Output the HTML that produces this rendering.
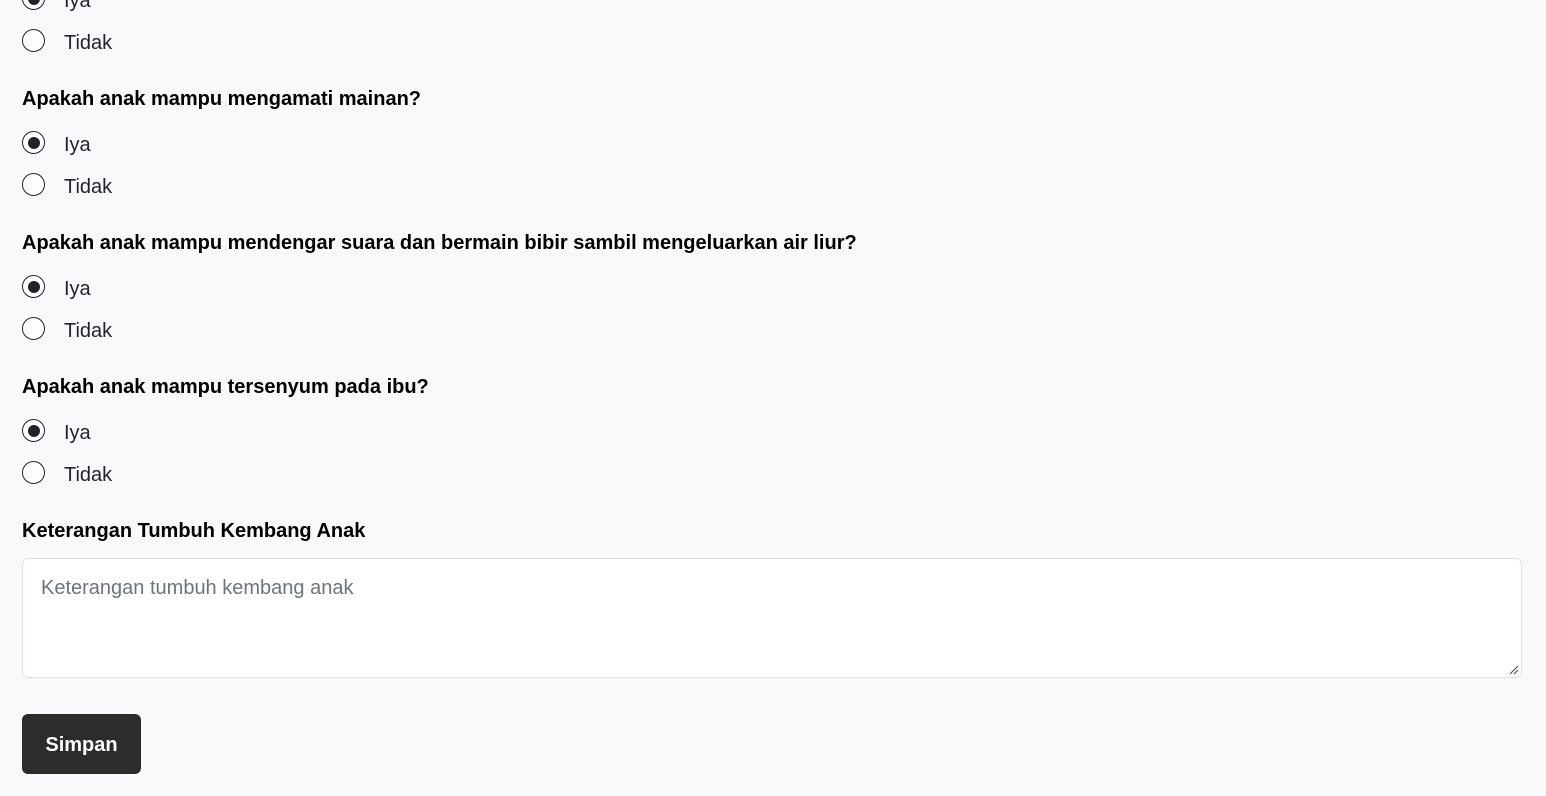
<!DOCTYPE html>
<html><head><style>
body{margin:0;width:1546px;height:796px;background:#f8f9fa;font-family:"Liberation Sans",sans-serif;color:#212529;position:relative;overflow:hidden}
.r{position:absolute;left:22px;width:21px;height:21px;border:1.5px solid #212529;border-radius:50%;background:#fff;box-sizing:content-box;margin-top:-1px}
.r.c::after{content:"";position:absolute;left:4.5px;top:4.5px;width:12px;height:12px;border-radius:50%;background:#212529}
.t{position:absolute;left:64px;font-size:20px;line-height:24px;margin-top:1px}
.q{position:absolute;left:22px;font-size:20px;font-weight:bold;line-height:24px;color:#000;margin-top:1px}
.ta{position:absolute;left:22px;top:558px;width:1498px;height:118px;border:1px solid #dee2e6;border-radius:6px;background:#fff}
.ta span{position:absolute;left:18px;top:18px;font-size:20px;color:#6c757d}
.btn{position:absolute;left:22px;top:714px;width:119px;height:60px;background:#2b2c2c;border-radius:6px;color:#fff;font-weight:bold;font-size:20px;line-height:62px;text-align:center}
</style></head><body>
<div class="r c" style="top:-12px"></div><div class="t" style="top:-12px">Iya</div>
<div class="r" style="top:30px"></div><div class="t" style="top:30px">Tidak</div>
<div class="q" style="top:86px">Apakah anak mampu mengamati mainan?</div>
<div class="r c" style="top:132px"></div><div class="t" style="top:132px">Iya</div>
<div class="r" style="top:174px"></div><div class="t" style="top:174px">Tidak</div>
<div class="q" style="top:230px">Apakah anak mampu mendengar suara dan bermain bibir sambil mengeluarkan air liur?</div>
<div class="r c" style="top:276px"></div><div class="t" style="top:276px">Iya</div>
<div class="r" style="top:318px"></div><div class="t" style="top:318px">Tidak</div>
<div class="q" style="top:374px">Apakah anak mampu tersenyum pada ibu?</div>
<div class="r c" style="top:420px"></div><div class="t" style="top:420px">Iya</div>
<div class="r" style="top:462px"></div><div class="t" style="top:462px">Tidak</div>
<div class="q" style="top:518px">Keterangan Tumbuh Kembang Anak</div>
<div class="ta"><span>Keterangan tumbuh kembang anak</span>
<svg style="position:absolute;right:2px;bottom:2px" width="12" height="12"><path d="M11 3L3 11M11 7L7 11" stroke="#555" stroke-width="1.2"/></svg></div>
<div class="btn">Simpan</div>
</body></html>
